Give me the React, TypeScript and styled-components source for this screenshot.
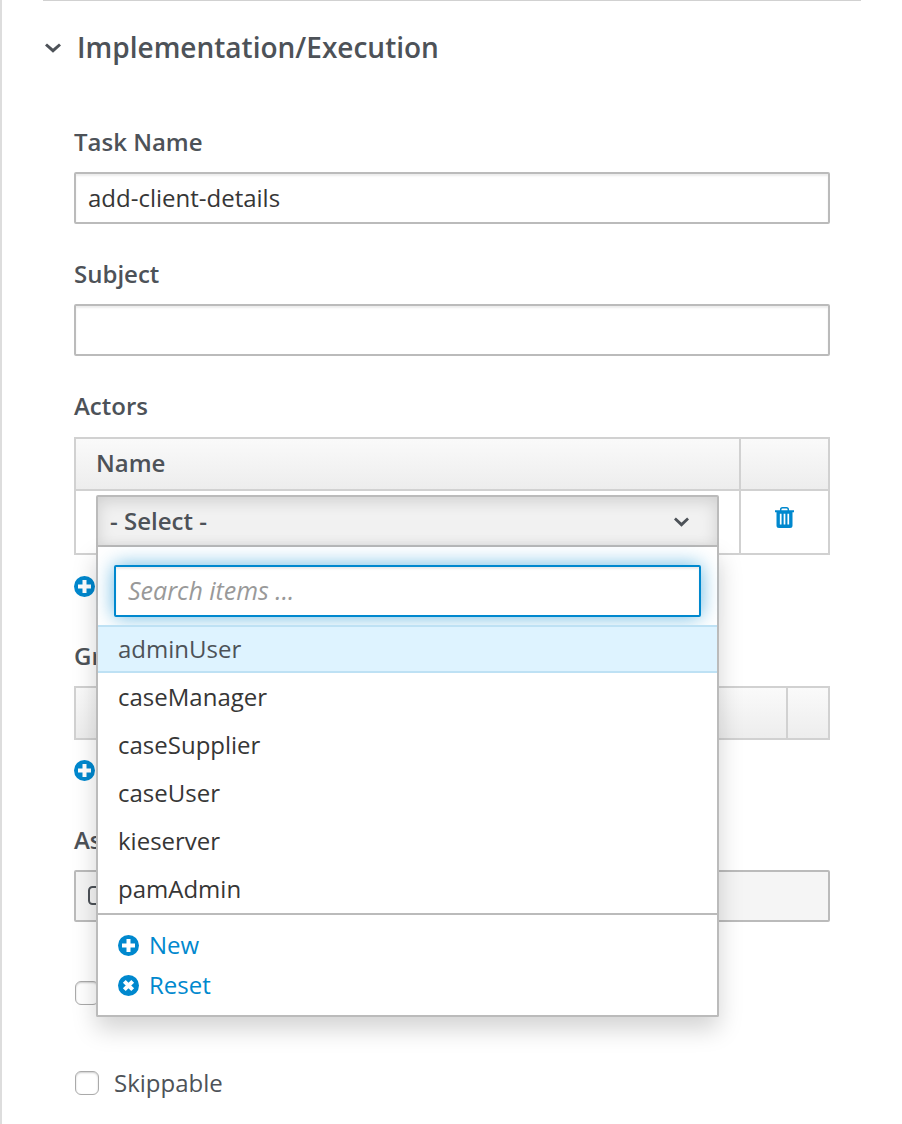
import React from 'react';
import styled, { createGlobalStyle } from 'styled-components';

const blue = '#0088ce';
const ink = '#4d5258';
const dark = '#363636';

const GlobalStyle = createGlobalStyle`
  *, *::before, *::after { box-sizing: border-box; }
  body {
    margin: 0;
    background: #fff;
    color: ${ink};
    font-family: 'Open Sans', 'Noto Sans', sans-serif;
    font-size: 24px;
    line-height: 40px;
  }
  button, input { font: inherit; color: inherit; }
`;

const Panel = styled.main`
  min-height: 100vh;
  padding: 0 41px;
  border-left: 2px solid #ddd;
  overflow: hidden;
`;

const Section = styled.section`
  border-top: 1px solid #d1d1d1;
  padding-top: 26px;
`;

const SectionTitle = styled.h2`
  margin: 0;
  font-size: 28px;
  font-weight: 600;
  line-height: 40px;
`;

const SectionToggle = styled.button`
  display: flex;
  align-items: center;
  gap: 16px;
  padding: 0 0 0 2px;
  border: 0;
  background: none;
  cursor: pointer;
`;

const Form = styled.form`
  display: flex;
  flex-direction: column;
  gap: 30px;
  margin: 0;
  padding: 55px 31px 20px;
`;

const Field = styled.div<{ $gap?: number }>`
  display: flex;
  flex-direction: column;
  gap: ${(p) => p.$gap ?? 10}px;
`;

const Label = styled.label`
  font-weight: 600;
`;

const TextInput = styled.input`
  width: 100%;
  height: 52px;
  padding: 0 12px 2px;
  border: 2px solid #bbb;
  border-radius: 2px;
  background: #fff;
  color: ${dark};
  box-shadow: inset 0 2px 2px rgba(3, 3, 3, 0.075);
  outline: none;
`;

const Table = styled.table`
  width: 100%;
  table-layout: fixed;
  border: 2px solid #d1d1d1;
  border-collapse: separate;
  border-spacing: 0;
`;

const HeadCell = styled.th<{ $width?: number }>`
  width: ${(p) => (p.$width ? `${p.$width}px` : 'auto')};
  height: 50px;
  padding: 0 20px 2px;
  text-align: left;
  font-weight: 600;
  & + & { border-left: 2px solid #d1d1d1; }
`;

const HeadRow = styled.tr`
  background: linear-gradient(#fafafa, #ededed);
`;

const BodyCell = styled.td`
  height: 64px;
  padding: 4px 20px 6px;
  border-top: 2px solid #d1d1d1;
  vertical-align: top;
  & + & {
    border-left: 2px solid #d1d1d1;
    text-align: center;
  }
`;

const IconButton = styled.button`
  display: inline-flex;
  padding: 12px 0 0;
  border: 0;
  background: none;
  color: ${blue};
  cursor: pointer;
`;

const LinkButton = styled.button`
  display: flex;
  align-items: center;
  align-self: flex-start;
  gap: 10px;
  height: 40px;
  padding: 0;
  border: 0;
  background: none;
  color: ${blue};
  cursor: pointer;
`;

const Dropdown = styled.div`
  position: relative;
`;

const DropdownToggle = styled.button`
  display: flex;
  align-items: center;
  justify-content: space-between;
  width: 100%;
  height: 52px;
  padding: 0 28px 0 12px;
  border: 2px solid #bbb;
  border-radius: 2px 2px 0 0;
  background: #f1f1f1;
  box-shadow: inset 0 4px 16px rgba(3, 3, 3, 0.14);
  font-weight: 600;
  cursor: pointer;
`;

const Menu = styled.div`
  position: absolute;
  z-index: 2;
  top: 100%;
  left: 0;
  right: 0;
  display: flex;
  flex-direction: column;
  border: 2px solid #bbb;
  border-top: 0;
  border-radius: 0 0 2px 2px;
  background: #fff;
  box-shadow: 0 12px 24px rgba(3, 3, 3, 0.175);
`;

const SearchRow = styled.div`
  padding: 18px 16px 8px;
`;

const SearchInput = styled(TextInput)`
  display: block;
  border-color: ${blue};
  box-shadow: inset 0 2px 2px rgba(3, 3, 3, 0.075), 0 0 20px rgba(0, 136, 206, 0.6);
  font-size: 25px;
  &::placeholder {
    color: #999;
    font-style: italic;
    opacity: 1;
  }
`;

const Options = styled.ul`
  position: relative;
  margin: 0;
  padding: 0;
  list-style: none;
  border-bottom: 2px solid #bbb;
`;

const Option = styled.li<{ $active?: boolean }>`
  height: 48px;
  padding: 2px 20px;
  border: solid ${(p) => (p.$active ? '#bee1f4' : 'transparent')};
  border-width: 2px 0;
  background: ${(p) => (p.$active ? '#def3ff' : '#fff')};
  color: ${(p) => (p.$active ? ink : dark)};
`;

const MenuActions = styled.div`
  padding: 10px 20px;
`;

const ReadonlyBox = styled.div`
  display: flex;
  align-items: center;
  height: 52px;
  padding: 0 12px 2px;
  border: 2px solid #bbb;
  border-radius: 2px;
  background: #f5f5f5;
`;

const CheckList = styled.div`
  display: flex;
  flex-direction: column;
  gap: 50px;
  padding-top: 21px;
`;

const CheckLabel = styled.label`
  display: flex;
  align-items: center;
  gap: 15px;
  height: 40px;
  padding-left: 1px;
`;

const Checkbox = styled.input`
  appearance: none;
  width: 24px;
  height: 24px;
  margin: 0;
  border: 1px solid #aaa;
  border-radius: 6px;
  background: #fff;
  box-shadow: inset 0 1px 2px rgba(0, 0, 0, 0.2);
`;

const Chevron = ({ width = 16 }: { width?: number }) => (
  <svg width={width} height={12} viewBox="0 0 16 12" preserveAspectRatio="none" fill="none" stroke="currentColor" strokeWidth="3" aria-hidden="true">
    <path d="M1 3.500 8 9.700 15 3.500" />
  </svg>
);

const PlusCircle = () => (
  <svg width="21" height="21" viewBox="0 0 21 21" aria-hidden="true">
    <circle cx="10.5" cy="10.5" r="10.5" fill="currentColor" />
    <path d="M10.5 4v13M4 10.5h13" stroke="#fff" strokeWidth="4" />
  </svg>
);

const CrossCircle = () => (
  <svg width="21" height="21" viewBox="0 0 21 21" aria-hidden="true">
    <circle cx="10.5" cy="10.5" r="10.5" fill="currentColor" />
    <path d="m6.300 6.300 8.400 8.400M14.700 6.300l-8.400 8.400" stroke="#fff" strokeWidth="4" />
  </svg>
);

const Trash = () => (
  <svg width="19" height="21" viewBox="0 0 19 21" aria-hidden="true">
    <path d="M5.700 4V2.600q0-1.800 1.800-1.800h4q1.800 0 1.800 1.800V4" fill="none" stroke="currentColor" strokeWidth="1.500" />
    <path d="M0 3.200h19v2h-1.500V18.500q0 2.500-2.500 2.500H4q-2.500 0-2.500-2.500V5.200H0z" fill="currentColor" />
    <path d="M5.700 6.800v10.800M9.500 6.800v10.800M13.300 6.800v10.800" stroke="#fff" strokeWidth="1.700" />
  </svg>
);

const BoxGlyph = () => (
  <svg width="19" height="19" viewBox="0 0 19 19" fill="none" stroke="currentColor" strokeWidth="2" aria-hidden="true">
    <rect x="1" y="1" width="17" height="17" rx="3.500" />
  </svg>
);

const users = ['adminUser', 'caseManager', 'caseSupplier', 'caseUser', 'kieserver', 'pamAdmin'];

export default function App() {
  return (
    <>
      <GlobalStyle />
      <Panel>
        <Section>
          <SectionTitle>
            <SectionToggle type="button" aria-expanded="true">
              <Chevron />
              Implementation/Execution
            </SectionToggle>
          </SectionTitle>
          <Form>
            <Field>
              <Label htmlFor="task-name">Task Name</Label>
              <TextInput id="task-name" defaultValue="add-client-details" />
            </Field>
            <Field>
              <Label htmlFor="subject">Subject</Label>
              <TextInput id="subject" />
            </Field>
            <Field $gap={11}>
              <Label as="span" id="actors-label">Actors</Label>
              <Table aria-labelledby="actors-label">
                <thead>
                  <HeadRow>
                    <HeadCell>Name</HeadCell>
                    <HeadCell $width={89} />
                  </HeadRow>
                </thead>
                <tbody>
                  <tr>
                    <BodyCell>
                      <Dropdown>
                        <DropdownToggle type="button" aria-expanded="true">
                          - Select -
                          <Chevron width={15} />
                        </DropdownToggle>
                        <Menu>
                          <SearchRow>
                            <SearchInput type="text" placeholder="Search items ..." aria-label="Search items" />
                          </SearchRow>
                          <Options>
                            {users.map((user, i) => (
                              <Option key={user} $active={i === 0}>{user}</Option>
                            ))}
                          </Options>
                          <MenuActions>
                            <LinkButton type="button"><PlusCircle />New</LinkButton>
                            <LinkButton type="button"><CrossCircle />Reset</LinkButton>
                          </MenuActions>
                        </Menu>
                      </Dropdown>
                    </BodyCell>
                    <BodyCell>
                      <IconButton type="button" aria-label="Delete actor"><Trash /></IconButton>
                    </BodyCell>
                  </tr>
                </tbody>
              </Table>
              <LinkButton type="button" aria-label="Add actor"><PlusCircle /></LinkButton>
            </Field>
            <Field>
              <Label as="span" id="groups-label">Groups</Label>
              <Table aria-labelledby="groups-label">
                <thead>
                  <HeadRow>
                    <HeadCell />
                    <HeadCell $width={42} />
                  </HeadRow>
                </thead>
              </Table>
              <LinkButton type="button" aria-label="Add group"><PlusCircle /></LinkButton>
            </Field>
            <Field>
              <Label as="span">Assignments</Label>
              <ReadonlyBox><BoxGlyph /></ReadonlyBox>
            </Field>
            <CheckList>
              <CheckLabel><Checkbox type="checkbox" aria-label="Is Async" /></CheckLabel>
              <CheckLabel><Checkbox type="checkbox" />Skippable</CheckLabel>
            </CheckList>
          </Form>
        </Section>
      </Panel>
    </>
  );
}
